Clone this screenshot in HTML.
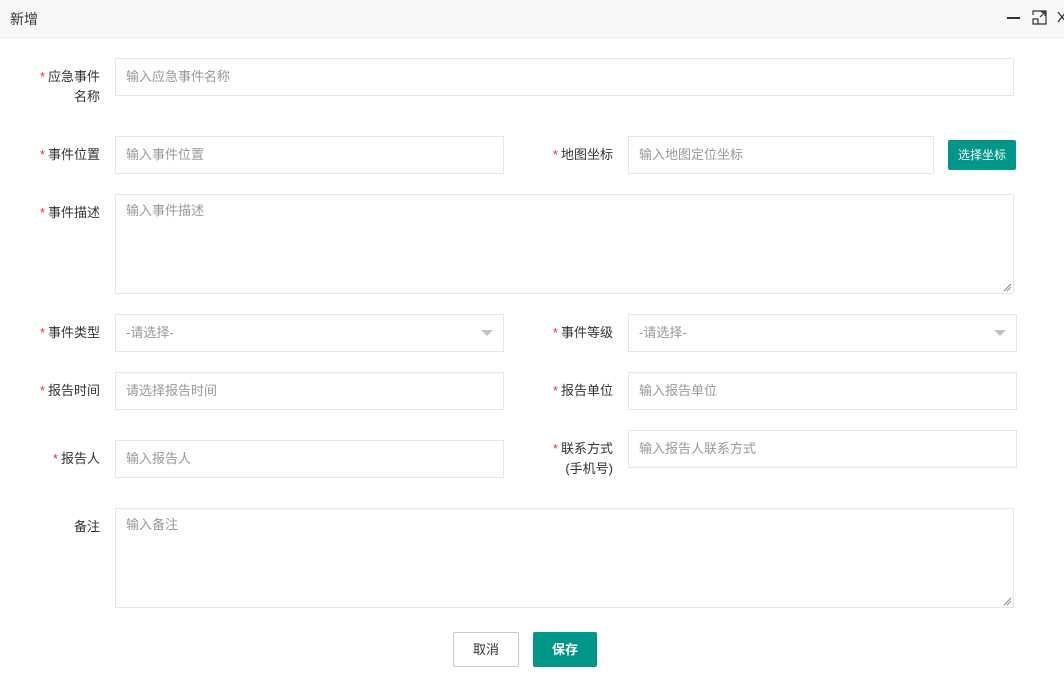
<!DOCTYPE html><html><head><meta charset="utf-8"><style>
body{margin:0;width:1064px;height:683px;background:#fff;font-family:"Liberation Sans","Noto Sans CJK SC",sans-serif;font-size:13px;color:#333;position:relative;overflow:hidden}
.hd{position:absolute;left:0;top:0;width:1064px;height:37px;background:#f8f8f8;border-bottom:1px solid #eee}
.hd span{position:absolute;left:10px;top:9px;font-size:14px;color:#333}
.a{position:absolute}
.in{position:absolute;border:1px solid #e6e6e6;box-sizing:border-box;color:#999;padding-left:10px;background:#fff}
.lb{position:absolute;right:964px;text-align:right;line-height:20px;color:#333}
.lb2{position:absolute;right:451px;text-align:right;line-height:20px}
.r{color:#e33;margin-right:3px}
.btn{position:absolute;background:#009688;color:#fff;text-align:center;border-radius:2px}
</style></head><body>
<div class="hd"><span>新增</span>
<div class="a" style="left:1007px;top:17px;width:13px;height:2px;background:#333"></div>
<svg class="a" style="left:1032px;top:10px" width="15" height="15" viewBox="0 0 15 15" fill="none" stroke="#333" stroke-width="1.2"><path d="M1 5V1h13v13H5M1 9h5v5H1zM8 7l5-5M9 2h4v4"/></svg>
<svg class="a" style="left:1057px;top:11px" width="10" height="12" viewBox="0 0 10 12" stroke="#333" stroke-width="1.3"><path d="M1 1l8 10M9 1L1 11"/></svg>
</div>
<div class="lb" style="top:67px"><span class="r">*</span>应急事件<br>名称</div>
<div class="in" style="left:115px;top:58px;width:899px;height:38px;line-height:36px">输入应急事件名称</div>
<div class="lb" style="top:145px"><span class="r">*</span>事件位置</div>
<div class="in" style="left:115px;top:136px;width:389px;height:38px;line-height:36px">输入事件位置</div>
<div class="lb2" style="top:145px"><span class="r">*</span>地图坐标</div>
<div class="in" style="left:628px;top:136px;width:306px;height:38px;line-height:36px">输入地图定位坐标</div>
<div class="btn" style="left:948px;top:140px;width:68px;height:30px;line-height:30px;font-size:12px">选择坐标</div>
<div class="lb" style="top:203px"><span class="r">*</span>事件描述</div>
<div class="in" style="left:115px;top:194px;width:899px;height:100px;padding-top:7px;line-height:18px">输入事件描述</div>
<svg class="a" style="left:1003px;top:283px" width="9" height="9" stroke="#888"><path d="M1 8L8 1M4 8L8 4"/></svg>
<div class="lb" style="top:323px"><span class="r">*</span>事件类型</div>
<div class="in" style="left:115px;top:314px;width:389px;height:38px;line-height:36px">-请选择-</div>
<div class="a" style="left:481px;top:330px;border:6px solid transparent;border-top:6px solid #c2c2c2"></div>
<div class="lb2" style="top:323px"><span class="r">*</span>事件等级</div>
<div class="in" style="left:628px;top:314px;width:389px;height:38px;line-height:36px">-请选择-</div>
<div class="a" style="left:994px;top:330px;border:6px solid transparent;border-top:6px solid #c2c2c2"></div>
<div class="lb" style="top:381px"><span class="r">*</span>报告时间</div>
<div class="in" style="left:115px;top:372px;width:389px;height:38px;line-height:36px">请选择报告时间</div>
<div class="lb2" style="top:381px"><span class="r">*</span>报告单位</div>
<div class="in" style="left:628px;top:372px;width:389px;height:38px;line-height:36px">输入报告单位</div>
<div class="lb" style="top:449px"><span class="r">*</span>报告人</div>
<div class="in" style="left:115px;top:440px;width:389px;height:38px;line-height:36px">输入报告人</div>
<div class="lb2" style="top:439px"><span class="r">*</span>联系方式<br>(手机号)</div>
<div class="in" style="left:628px;top:430px;width:389px;height:38px;line-height:36px">输入报告人联系方式</div>
<div class="lb" style="top:517px">备注</div>
<div class="in" style="left:115px;top:508px;width:899px;height:100px;padding-top:7px;line-height:18px">输入备注</div>
<svg class="a" style="left:1003px;top:597px" width="9" height="9" stroke="#888"><path d="M1 8L8 1M4 8L8 4"/></svg>
<div class="a" style="left:453px;top:632px;width:66px;height:35px;border:1px solid #c9c9c9;box-sizing:border-box;text-align:center;line-height:33px;border-radius:2px">取消</div>
<div class="btn" style="left:533px;top:632px;width:64px;height:35px;line-height:35px;font-weight:bold">保存</div>
</body></html>
